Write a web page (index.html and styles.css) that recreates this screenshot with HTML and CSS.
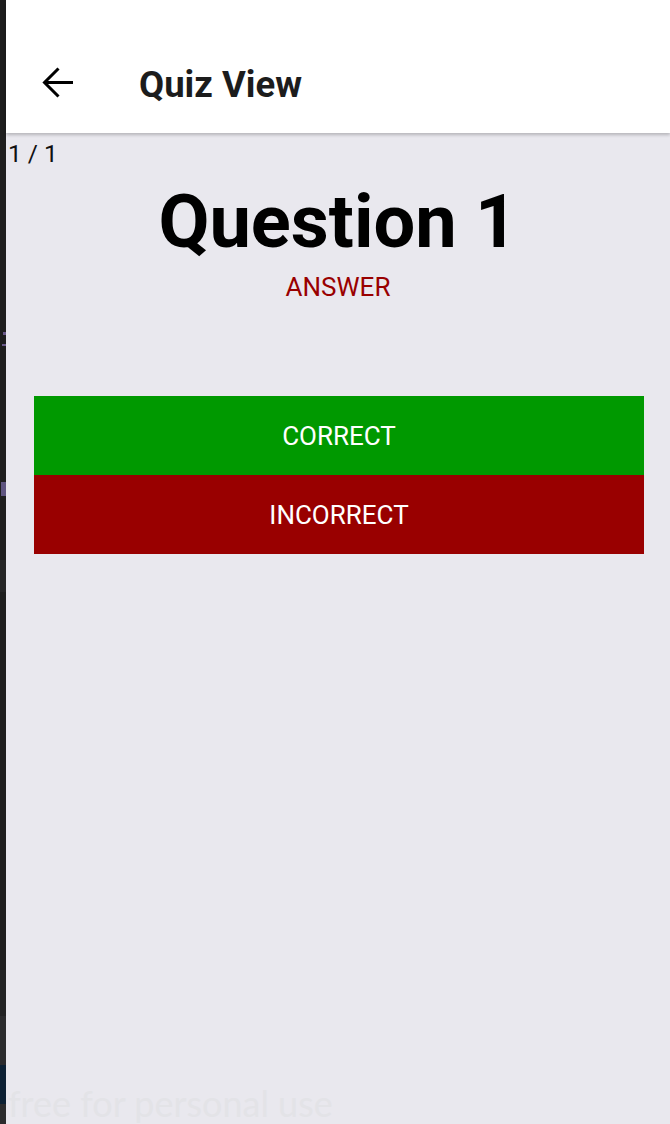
FILE: index.html
```html
<!DOCTYPE html>
<html lang="en">
<head>
<meta charset="utf-8">
<title>Quiz View</title>
<link rel="stylesheet" href="styles.css">
</head>
<body>
<div class="page">
  <aside class="strip">
    <div class="seg seg-a"></div>
    <div class="seg seg-b"><span class="mark mark-1"></span><span class="mark mark-2"></span><span class="mark mark-3"></span></div>
    <div class="seg seg-c"></div>
    <div class="seg seg-d"></div>
    <div class="seg seg-e"></div>
    <div class="seg seg-f"></div>
    <div class="seg seg-g"></div>
    <div class="seg seg-h"></div>
  </aside>
  <main class="app">
    <header class="appbar">
      <button class="back" aria-label="Back">
        <svg width="34" height="34" viewBox="0 0 34 34" fill="none" stroke="#000" stroke-width="3">
          <path d="M32 16.5H4" />
          <path d="M17.5 2.5L3.5 16.5L17.5 30.5" />
        </svg>
      </button>
      <h1 class="title">Quiz View</h1>
    </header>
    <div class="counter">1 / 1</div>
    <h2 class="question">Question 1</h2>
    <div class="answer">ANSWER</div>
    <div class="actions">
      <button class="btn btn-correct">CORRECT</button>
      <button class="btn btn-incorrect">INCORRECT</button>
    </div>
    <div class="watermark">free for personal use</div>
  </main>
</div>
</body>
</html>
```
FILE: styles.css
```css
html, body {
  margin: 0;
  padding: 0;
  height: 100%;
}
body {
  font-family: Roboto, "Liberation Sans", sans-serif;
  background: #e9e8ee;
}
.page {
  display: flex;
  height: 1124px;
  overflow: hidden;
}
.strip {
  width: 6px;
  flex: none;
  display: flex;
  flex-direction: column;
  background: #1e1e1e;
}
.seg { flex: none; position: relative; }
.seg-a { height: 320px; background: #1e1e1e; }
.seg-b { height: 240px; background: #1e1e1e; }
.seg-c { height: 32px; background: #252526; }
.seg-d { height: 378px; background: #1e1e1e; }
.seg-e { height: 46px; background: #232324; }
.seg-f { height: 49px; background: #2b2b2d; }
.seg-g { height: 39px; background: #0c2033; }
.seg-h { height: 20px; background: #2b2b2d; }
.mark {
  position: absolute;
  background: #6a5a8a;
}
.mark-1 { left: 3px; top: 12px; width: 3px; height: 3px; }
.mark-2 { left: 2px; top: 24px; width: 4px; height: 2px; }
.mark-3 { left: 1px; top: 162px; width: 5px; height: 14px; background: #5f5580; }

.app {
  flex: 1;
  position: relative;
  background: #e9e8ee;
  display: flex;
  flex-direction: column;
}
.appbar {
  height: 100px;
  padding-top: 33px;
  background: #fff;
  display: flex;
  align-items: center;
  box-shadow: 0 2px 3px rgba(0,0,0,0.22);
  position: relative;
  z-index: 1;
}
.back {
  margin-left: 35px;
  width: 34px;
  height: 34px;
  padding: 0;
  border: 0;
  background: none;
  display: flex;
}
.title {
  margin: 2px 0 0 64px;
  font-size: 36.5px;
  font-weight: 700;
  color: #1c1c1c;
  letter-spacing: 0;
}
.counter {
  margin: 6px 0 0 2px;
  font-size: 24.5px;
  line-height: 29px;
  color: #111;
}
.question {
  margin: 10px 0 0;
  text-align: center;
  font-size: 74px;
  font-weight: 700;
  line-height: 88px;
  color: #000;
}
.answer {
  margin-top: 6px;
  text-align: center;
  font-size: 26px;
  line-height: 30px;
  color: #990000;
}
.actions {
  margin: 94px 26px 0 28px;
  display: flex;
  flex-direction: column;
}
.btn {
  height: 79px;
  border: 0;
  margin: 0;
  font-family: Roboto, "Liberation Sans", sans-serif;
  font-size: 26px;
  color: #fff;
  display: flex;
  align-items: center;
  justify-content: center;
}
.btn-correct { background: #009900; }
.btn-incorrect { background: #990000; }
.watermark {
  position: absolute;
  left: 2px;
  bottom: 3px;
  font-family: Lato, "Open Sans", sans-serif;
  font-size: 36px;
  line-height: 36px;
  color: #e3e3e7;
  white-space: nowrap;
}
```
